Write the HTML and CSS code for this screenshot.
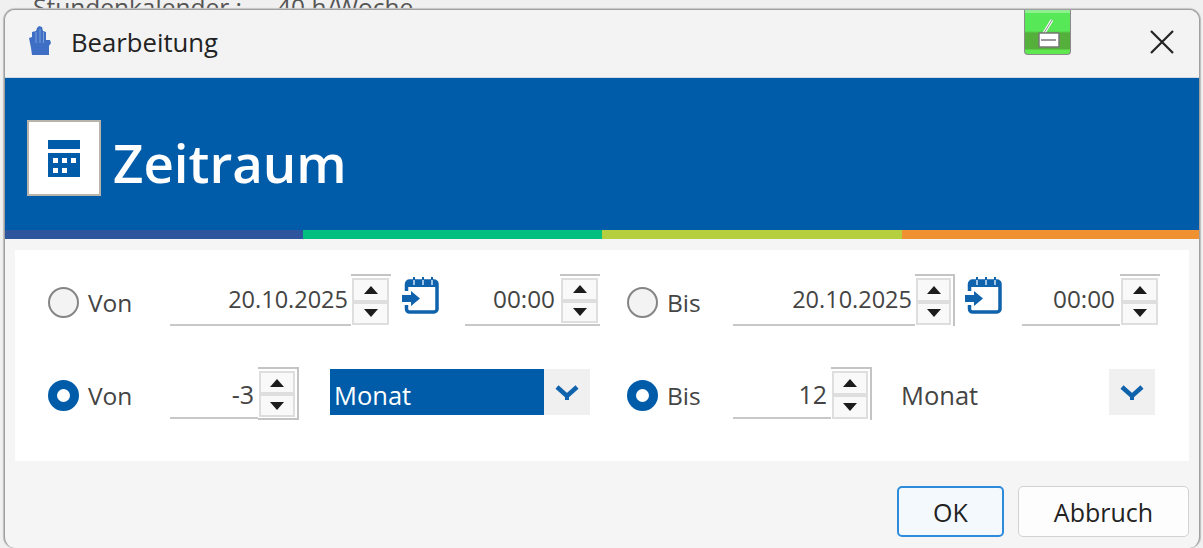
FILE: index.html
```html
<!DOCTYPE html>
<html lang="de">
<head>
    <meta charset="UTF-8">
    <title>Bearbeitung</title>
    <link rel="stylesheet" href="styles.css">
</head>
<body>
    <div class="behind"><span>Stundenkalender :</span><span>40 h/Woche</span></div>

    <div class="dialog">
        <div class="titlebar">
            <svg class="app-icon" viewBox="0 0 24 30">
                <path fill="#3f6fc4" d="M1 12L4 11 4 6 8 5 9 2 11 0 14 1 15 5 18 6 18 14 22 14 23 17 21 20 21 29 4 29 3 22z"/>
                <path d="M8 6V17M12 3V17M15.500 6V17" stroke="#7c9fdc" stroke-width="1" fill="none"/>
            </svg>
            <span class="title">Bearbeitung</span>
            <svg class="close" viewBox="0 0 24 24">
                <path d="M1 1L23 23M23 1L1 23" stroke="#222" stroke-width="2.2" fill="none"/>
            </svg>
        </div>

        <!-- green tab from the app behind, sits over the title bar -->
        <div class="tray-badge">
            <svg viewBox="0 0 47 46" width="47" height="46">
                <path d="M19 24L27 11" stroke="#fff" stroke-width="3" fill="none"/>
                <path d="M19 24L27 11" stroke="#888" stroke-width="1" fill="none"/>
                <rect x="14" y="24" width="20" height="14" rx="1" fill="#fff" stroke="#777" stroke-width="1.5"/>
                <path d="M16 31H31" stroke="#777" stroke-width="1.5"/>
            </svg>
        </div>

        <div class="banner">
            <div class="banner-icon">
                <svg viewBox="0 0 32 37" width="32" height="37">
                    <path fill="#005ca9" fill-rule="evenodd" d="M0 0H32V9H0zM0 13H32V37H0zM5 18V23H10V18zM14 18V23H19V18zM23 18V23H28V18zM5 28V33H10V28zM14 28V33H19V28z"/>
                </svg>
            </div>
            <h1>Zeitraum</h1>
        </div>
        <div class="stripes">
            <div class="stripe-blue"></div>
            <div class="stripe-green"></div>
            <div class="stripe-lime"></div>
            <div class="stripe-orange"></div>
        </div>

        <div class="body">
            <div class="panel">
                <div class="row row-dates">
                    <label class="choice"><span class="radio"></span>Von</label>
                    <div class="field">20.10.2025</div>
                    <div class="spin"><span class="spin-btn"><i class="up"></i></span><span class="spin-btn"><i class="down"></i></span></div>
                    <div class="cal-cell"><svg class="cal-icon" viewBox="0 0 38 38"><use href="#cal"/></svg></div>
                    <div class="field field-time">00:00</div>
                    <div class="spin spin-under"><span class="spin-btn"><i class="up"></i></span><span class="spin-btn"><i class="down"></i></span></div>
                    <div></div>
                    <label class="choice"><span class="radio"></span>Bis</label>
                    <div class="field">20.10.2025</div>
                    <div class="spin spin-side"><span class="spin-btn"><i class="up"></i></span><span class="spin-btn"><i class="down"></i></span></div>
                    <div class="cal-cell cal-cell-r"><svg class="cal-icon" viewBox="0 0 38 38"><use href="#cal"/></svg></div>
                    <div class="field field-time">00:00</div>
                    <div class="spin"><span class="spin-btn"><i class="up"></i></span><span class="spin-btn"><i class="down"></i></span></div>
                </div>

                <div class="row row-relative">
                    <label class="choice"><span class="radio checked"></span>Von</label>
                    <div class="field">-3</div>
                    <div class="spin spin-box"><span class="spin-btn"><i class="up"></i></span><span class="spin-btn"><i class="down"></i></span></div>
                    <div class="select selected">Monat</div>
                    <div class="arrow"><svg viewBox="0 0 24 16" width="24" height="16"><use href="#chev"/></svg></div>
                    <div></div>
                    <label class="choice"><span class="radio checked"></span>Bis</label>
                    <div class="field">12</div>
                    <div class="spin spin-side"><span class="spin-btn"><i class="up"></i></span><span class="spin-btn"><i class="down"></i></span></div>
                    <div class="select">Monat</div>
                    <div class="arrow"><svg viewBox="0 0 24 16" width="24" height="16"><use href="#chev"/></svg></div>
                </div>
            </div>

            <div class="footer">
                <button type="button" class="btn btn-ok">OK</button>
                <button type="button" class="btn btn-cancel">Abbruch</button>
            </div>
        </div>
    </div>

    <svg class="defs" width="0" height="0">
        <symbol id="cal" viewBox="0 0 38 38">
            <path d="M4.500 14V7a3 3 0 0 1 3-3H32a3 3 0 0 1 3 3V32a3 3 0 0 1-3 3H8a3 3 0 0 1-3.500-3V28" fill="none" stroke="#0f62ac" stroke-width="3.500"/>
            <path d="M4 4H36V10H4z" fill="#0f62ac"/>
            <path d="M12 3V8M21 3V8M30 3V8" stroke="#9cc3e4" stroke-width="2"/>
            <path d="M12 0V3M21 0V3M30 0V3" stroke="#0f62ac" stroke-width="2"/>
            <path d="M0 18H9V14L18 21.500 9 29V25H0z" fill="#0f62ac"/>
        </symbol>
        <symbol id="chev" viewBox="0 0 24 16">
            <path d="M2 3L12 12 22 3" fill="none" stroke="#0f62ac" stroke-width="4.500"/>
            <path d="M12 10V16" stroke="#0f62ac" stroke-width="4"/>
        </symbol>
    </svg>
</body>
</html>
```

FILE: styles.css
```css
* {
    box-sizing: border-box;
}
body {
    margin: 0;
    height: 548px;
    overflow: hidden;
    background-color: #f0f0f0;
    font-family: "Open Sans", "Noto Sans", sans-serif;
    color: #444;
}
.behind {
    height: 9px;
    overflow: hidden;
    padding-left: 33px;
    display: flex;
    gap: 35px;
    font-size: 24.500px;
    line-height: 14px;
    color: #555;
}
.behind span {
    white-space: nowrap;
}
.dialog {
    position: relative;
    margin: 0 3px 0 4px;
    height: 539px;
    border: 1px solid #a0a0a0;
    border-bottom: 0;
    border-radius: 11px;
    box-shadow: -1px 0 1px #bcbcbc, 1px 0 1px #bcbcbc, 0 -1px 1px #c8c8c8;
    background-color: #f5f5f5;
    overflow: hidden;
}
.titlebar {
    height: 67px;
    display: flex;
    align-items: center;
    background-color: #f3f3f3;
    padding-left: 23px;
}
.app-icon {
    width: 24px;
    height: 30px;
    margin-bottom: 6px;
}
.title {
    margin-left: 19px;
    margin-bottom: 2px;
    font-size: 25.700px;
    color: #222;
}
.close {
    width: 24px;
    height: 24px;
    margin-left: auto;
    margin-right: 25px;
    margin-bottom: 3px;
}
.tray-badge {
    position: absolute;
    left: 1019px;
    top: -1px;
    width: 47px;
    height: 46px;
    border: 1px solid #8a8a8a;
    border-top: 0;
    border-radius: 0 0 4px 4px;
    background: linear-gradient(#8ef08e 0, #8ef08e 4px, #57e857 4px, #57e857 22px, #54b03a 24px, #54b03a 40px, #5fe84f 41px);
}
.banner {
    height: 153px;
    background-color: #005ca9;
    border-top: 1px solid #cfd8e3;
    display: flex;
    align-items: center;
    padding-left: 22px;
    padding-top: 8px;
}
.banner-icon {
    width: 74px;
    height: 76px;
    background-color: #fff;
    border: 2px solid #b8b4ac;
    display: flex;
    align-items: center;
    justify-content: center;
}
.banner h1 {
    margin: 0 0 0 12px;
    padding-top: 9px;
    font-size: 52.800px;
    font-weight: 600;
    color: #fff;
    line-height: 76px;
}
.stripes {
    display: grid;
    grid-template-columns: 298px 299px 300px 297px;
    height: 9px;
}
.stripe-blue { background-color: #2e549e; }
.stripe-green { background-color: #00bf7f; }
.stripe-lime { background-color: #b5cf3f; }
.stripe-orange { background-color: #ef9131; }

.body {
    padding: 11px 10px 0 10px;
}
.panel {
    background-color: #fff;
    height: 211px;
    padding: 24px 0 0 33px;
}
.row {
    display: grid;
    align-items: stretch;
}
.row-dates {
    height: 50px;
    grid-template-columns: 122px 181px 40px 74px 95px 40px 27px 106px 182px 40px 67px 98px 40px;
}
.row-relative {
    height: 53px;
    margin-top: 43px;
    grid-template-columns: 122px 88px 41px 245px 46px 37px 106px 98px 41px 237px 46px;
}
.choice {
    display: flex;
    align-items: center;
    font-size: 24.500px;
    gap: 9px;
    padding-top: 4px;
}
.row-relative .choice {
    padding-top: 3px;
}
.radio {
    width: 31px;
    height: 31px;
    border-radius: 50%;
    border: 2px solid #858585;
    background-color: #f3f3f3;
}
.radio.checked {
    border: 9px solid #005ca9;
    background-color: #fff;
}
.field {
    border-bottom: 2px solid #c8c8c8;
    text-align: right;
    font-size: 23.500px;
    line-height: 50px;
    padding-right: 3px;
}
.field-time {
    font-size: 24.300px;
    padding-right: 5px;
}
.row-relative .field {
    font-size: 25px;
    line-height: 54px;
    padding-right: 4px;
    height: 52px;
}
.spin {
    display: flex;
    flex-direction: column;
    border-top: 2px solid #c4c4c4;
    padding: 2px 2px 1px 1px;
}
.spin-under {
    border-bottom: 2px solid #c8c8c8;
}
.spin-side {
    border-right: 2px solid #c4c4c4;
}
.spin-box {
    border-right: 2px solid #c4c4c4;
    border-bottom: 2px solid #c4c4c4;
}
.spin-btn {
    flex: 1;
    border: 2px solid #dedede;
    background-color: #f9f9f9;
    display: flex;
    align-items: center;
    justify-content: center;
}
.spin-btn i {
    width: 0;
    height: 0;
    border-left: 7.500px solid transparent;
    border-right: 7.500px solid transparent;
}
.spin-btn .up {
    border-bottom: 8px solid #1c1c1c;
}
.spin-btn .down {
    border-top: 8px solid #1c1c1c;
}
.cal-cell {
    padding: 3px 0 0 11px;
}
.cal-cell-r {
    padding-left: 10px;
}
.cal-icon {
    width: 38px;
    height: 38px;
}
.select {
    margin-left: 29px;
    font-size: 25.500px;
    height: 46px;
    margin-top: 2px;
    line-height: 52px;
}
.selected {
    margin-left: 31px;
    padding-left: 4px;
    background-color: #005ca9;
    color: #fff;
}
.arrow {
    height: 46px;
    margin-top: 2px;
    background-color: #f0f0f0;
    display: flex;
    align-items: center;
    justify-content: center;
}
.footer {
    display: flex;
    justify-content: flex-end;
    gap: 14px;
    padding: 25px 0 0 0;
}
.btn {
    height: 51px;
    border-radius: 5px;
    font-family: inherit;
    font-size: 25px;
    color: #222;
}
.btn-ok {
    width: 107px;
    border: 2px solid #2e8bdc;
    background-color: #f4f9fd;
}
.btn-cancel {
    width: 171px;
    border: 1px solid #d2d2d2;
    background-color: #fdfdfd;
}
.defs {
    position: absolute;
}
```
